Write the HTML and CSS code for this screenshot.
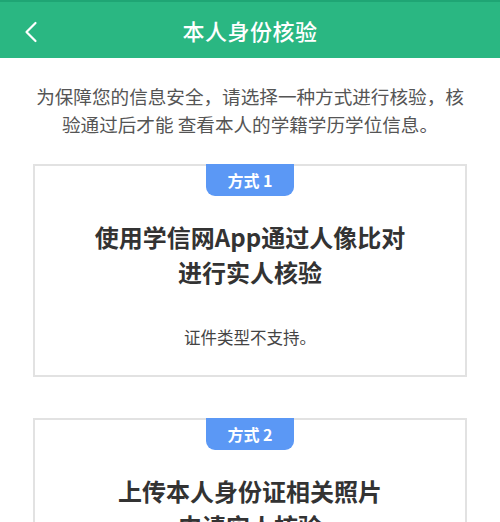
FILE: index.html
```html
<!DOCTYPE html>
<html lang="zh-CN">
<head>
<meta charset="utf-8">
<title>本人身份核验</title>
<link rel="stylesheet" href="styles.css">
</head>
<body>
<header class="topbar">
  <span class="back">
    <svg width="14" height="22" viewBox="0 0 14 22"><polyline points="11.5,2 2.5,11 11.5,20" fill="none" stroke="#fff" stroke-width="2.2" stroke-linecap="round" stroke-linejoin="round"/></svg>
  </span>
  <h1 class="title">本人身份核验</h1>
</header>
<p class="desc">为保障您的信息安全，请选择一种方式进行核验，核验通过后才能 查看本人的学籍学历学位信息。</p>
<section class="card">
  <div class="badge">方式 1</div>
  <h2 class="card-title">使用学信网App通过人像比对<br>进行实人核验</h2>
  <p class="note">证件类型不支持。</p>
</section>
<section class="card">
  <div class="badge">方式 2</div>
  <h2 class="card-title">上传本人身份证相关照片<br>申请实人核验</h2>
</section>
</body>
</html>
```
FILE: styles.css
```css
html, body {
  margin: 0;
  padding: 0;
  background: #fff;
}
body {
  font-family: "Noto Sans CJK SC", "Noto Sans", sans-serif;
  overflow: hidden;
  height: 522px;
}
.topbar {
  height: 56px;
  border-top: 2px solid #1fa574;
  background: #2ab782;
  display: flex;
  align-items: center;
  justify-content: center;
  position: relative;
}
.back {
  position: absolute;
  left: 24px;
  top: 19px;
  width: 14px;
  height: 22px;
  display: flex;
}
.title {
  margin: 0;
  color: #fff;
  font-size: 22px;
  font-weight: 500;
  line-height: 30px;
  letter-spacing: 0.5px;
}
.desc {
  margin: 24px 0 0;
  padding: 0 33px;
  text-align: center;
  color: #555;
  font-size: 18.6px;
  line-height: 28px;
}
.card {
  margin: 26px 33px 0 33px;
  border: 2px solid #e2e2e2;
  display: flex;
  flex-direction: column;
  align-items: center;
  box-sizing: border-box;
  padding-bottom: 26px;
}
.card + .card {
  margin-top: 41px;
}
.badge {
  margin-top: -2px;
  width: 88px;
  height: 32px;
  background: #5b98f5;
  color: #fff;
  font-size: 16px;
  font-weight: 700;
  line-height: 32px;
  text-align: center;
  border-radius: 0 0 9px 9px;
}
.card-title {
  margin: 23px 0 0;
  text-align: center;
  color: #333;
  font-size: 24px;
  font-weight: 700;
  line-height: 35px;
}
.note {
  margin: 36px 0 0;
  color: #444;
  font-size: 16.5px;
  line-height: 24px;
  text-align: center;
}
```
